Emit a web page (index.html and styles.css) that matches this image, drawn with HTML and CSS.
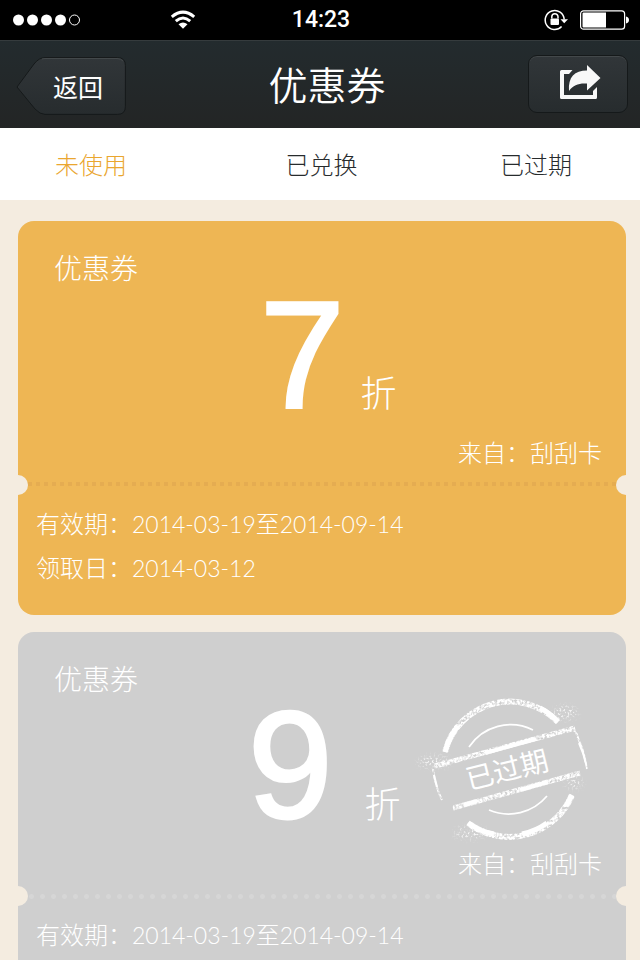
FILE: index.html
```html
<!DOCTYPE html>
<html lang="zh-CN">
<head>
<meta charset="utf-8">
<meta name="viewport" content="width=device-width, initial-scale=1">
<title>优惠券</title>
<link rel="stylesheet" href="styles.css">
</head>
<body>
<div class="status">
  <div class="status-side">
    <svg class="signal" width="70" height="14" viewBox="0 0 70 14" aria-hidden="true">
      <g fill="#fff"><circle cx="6.500" cy="7" r="5.500"/><circle cx="20.500" cy="7" r="5.500"/><circle cx="34.500" cy="7" r="5.500"/><circle cx="48.500" cy="7" r="5.500"/></g>
      <circle cx="62.500" cy="7" r="5" fill="none" stroke="#fff"/>
    </svg>
    <svg class="wifi" width="26" height="20" viewBox="0 0 26 20" aria-hidden="true">
      <g fill="none" stroke="#fff" stroke-width="3"><path d="M1.800 6.800Q13-2.600 24.200 6.800"/><path d="M5.800 11.200Q13 4.800 20.200 11.200"/></g>
      <path d="M8.500 14.200Q13 10.700 17.500 14.200L13 18.800Z" fill="#fff"/>
    </svg>
  </div>
  <time class="clock">14:23</time>
  <div class="status-side status-right">
    <svg width="24" height="22" viewBox="0 0 24 22" aria-hidden="true">
      <path d="M17.600 17.600A9.500 9.500 0 1 1 20.200 10.500" fill="none" stroke="#fff" stroke-width="1.500"/>
      <path d="M16.500 10.300H24L20.200 14.300Z" fill="#fff"/>
      <path d="M7.800 9.500V7.800a3.100 3.100 0 0 1 6.200 0v1.700" fill="none" stroke="#fff" stroke-width="1.500"/>
      <rect x="6.500" y="9.500" width="8.500" height="6.500" rx="1" fill="#fff"/>
    </svg>
    <svg width="50" height="20" viewBox="0 0 50 20" aria-hidden="true">
      <rect x=".6" y=".8" width="44" height="18.400" rx="3" fill="none" stroke="#fff" stroke-width="1.200"/>
      <path d="M2.500 3.500a1 1 0 0 1 1-1H26v15H3.500a1 1 0 0 1-1-1ZM46 6.500q3 .6 3 3.500t-3 3.500Z" fill="#fff"/>
    </svg>
  </div>
</div>
<header class="header">
  <button class="back" type="button">
    <svg class="back-shape" viewBox="0 0 110 58" preserveAspectRatio="none" aria-hidden="true">
      <defs><linearGradient id="key" x1="0" y1="0" x2="0" y2="1"><stop offset="0" stop-color="#313639"/><stop offset="1" stop-color="#272c2e"/></linearGradient></defs>
      <path d="M1 30L18 7Q23 .6 29 .6H101.500Q109.400 .6 109.400 8.500V49.500Q109.400 57.400 101.500 57.400H29Q24 57.400 19 52Z" fill="url(#key)" stroke="#15191a"/>
      <path d="M26 2Q28 1.500 30 1.500H101Q105 1.500 107 4" fill="none" stroke="#43484a"/>
    </svg>
    <span class="back-label">返回</span>
  </button>
  <h1 class="title">优惠券</h1>
  <button class="share" type="button" aria-label="分享">
    <svg width="44" height="38" viewBox="0 0 44 38" aria-hidden="true">
      <path d="M15.500 5H4.500Q3 5 3 6.500V32.500Q3 34 4.500 34H38.500Q40 34 40 32.500V22L36 26V30H7V9H12Z" fill="#f8f8f8"/>
      <path d="M12 26C11 12 17.500 5.500 30 5.500V0L43.500 13L30 25.500V18.500C22 18 16.500 19.500 12 26Z" fill="#f8f8f8"/>
    </svg>
  </button>
</header>
<nav class="tabs">
  <a class="tab tab-active" href="#unused" aria-current="page">未使用</a>
  <a class="tab" href="#redeemed">已兑换</a>
  <a class="tab" href="#expired">已过期</a>
</nav>
<main class="coupons">
  <article class="coupon">
    <div class="coupon-top">
      <h2 class="coupon-name">优惠券</h2>
      <p class="offer"><span class="offer-number">7</span><span class="offer-unit">折</span></p>
      <p class="source">来自：刮刮卡</p>
    </div>
    <div class="coupon-bottom">
      <p>有效期：<span class="date">2014-03-19</span>至<span class="date">2014-09-14</span></p>
      <p>领取日：<span class="date">2014-03-12</span></p>
    </div>
  </article>
  <article class="coupon coupon-expired">
    <div class="coupon-top">
      <h2 class="coupon-name">优惠券</h2>
      <p class="offer"><span class="offer-number">9</span><span class="offer-unit">折</span></p>
      <p class="source">来自：刮刮卡</p>
      <svg class="stamp" width="180" height="160" viewBox="0 0 180 160" role="img" aria-label="已过期">
        <defs>
          <filter id="worn" x="-20" y="-20" width="220" height="200" filterUnits="userSpaceOnUse" color-interpolation-filters="sRGB">
            <feTurbulence type="fractalNoise" baseFrequency=".4" numOctaves="2" seed="8"/>
            <feColorMatrix values="0 0 0 0 1  0 0 0 0 1  0 0 0 0 1  3 0 0 0 -.800"/>
            <feComposite in2="SourceGraphic" operator="in"/>
          </filter>
          <filter id="dust" x="-20" y="-20" width="220" height="200" filterUnits="userSpaceOnUse" color-interpolation-filters="sRGB">
            <feGaussianBlur in="SourceGraphic" stdDeviation="3" result="soft"/>
            <feTurbulence type="fractalNoise" baseFrequency=".5" numOctaves="2" seed="3"/>
            <feColorMatrix values="0 0 0 0 1  0 0 0 0 1  0 0 0 0 1  4 0 0 0 -1.900"/>
            <feComposite in2="soft" operator="in"/>
          </filter>
        </defs>
        <g fill="none" stroke="#fff">
          <g filter="url(#worn)">
            <path d="M25 62A67 67 0 0 1 138 32M48 133A68 68 0 0 0 152 105" stroke-width="6"/>
            <path d="M15 76L155 38M33 118L160 83" stroke-width="5"/>
            <path d="M13 79Q15 96 22 110M147 39Q156 38 158 48Q164 61 167 79" stroke-width="2"/>
          </g>
          <path d="M25 62Q29 47 38 36M120 18Q130 23 138 32M48 133Q61 142 74 144M102 144Q116 141 127 133M146 116L152 105" stroke-width="5"/>
          <path d="M65 63L115 49M44 115L57 111M100 100L128 92" stroke-width="4"/>
          <path d="M159 53Q164 64 166 74M14 85L17 97" stroke-width="2"/>
          <path d="M49 57A50 50 0 0 1 113 40M69 120A50 50 0 0 0 127 106" stroke-width="1.700"/>
        </g>
        <g fill="#fff" filter="url(#dust)">
          <ellipse cx="145" cy="23" rx="12" ry="6"/><ellipse cx="50" cy="143" rx="16" ry="5"/><ellipse cx="14" cy="72" rx="16" ry="5"/><ellipse cx="154" cy="93" rx="8" ry="5"/>
        </g>
        <text class="stamp-text" x="87" y="90" transform="rotate(-14 87 80)">已过期</text>
      </svg>
    </div>
    <div class="coupon-bottom">
      <p>有效期：<span class="date">2014-03-19</span>至<span class="date">2014-09-14</span></p>
    </div>
  </article>
</main>
</body>
</html>
```
FILE: styles.css
```css
* { box-sizing: border-box; }
html { scrollbar-width: none; }
body {
  margin: 0;
  background: #f4ece0;
  font-family: "Liberation Sans", "Noto Sans CJK SC", sans-serif;
  font-weight: 300;
}
h1, h2, p { margin: 0; font-weight: 300; }
button { border: 0; padding: 0; font: inherit; color: inherit; cursor: pointer; }
svg { display: block; }

.status {
  display: grid;
  grid-template-columns: 1fr auto 1fr;
  align-items: center;
  height: 40px;
  padding: 0 10px 0 12px;
  background: #000;
  color: #fff;
}
.status-side { display: flex; align-items: center; }
.status-right { justify-content: flex-end; gap: 12px; }
.wifi { margin-left: 88px; }
.clock { font: 500 23px/40px Roboto, sans-serif; }

.header {
  display: flex;
  align-items: center;
  justify-content: space-between;
  height: 88px;
  padding: 2px 12px 0 16px;
  border-top: 1px solid #353b3d;
  background: linear-gradient(#232b2e, #232525);
  color: #fff;
}
.back {
  position: relative;
  width: 110px;
  height: 58px;
  padding-left: 14px;
  background: none;
}
.back-shape { position: absolute; inset: 0; width: 100%; height: 100%; }
.back-label { position: relative; font: 400 25px/56px "Noto Sans CJK SC", sans-serif; }
.title { padding-bottom: 6px; font: 350 39px/72px "Noto Sans CJK SC", sans-serif; }
.share {
  display: flex;
  align-items: center;
  justify-content: center;
  width: 100px;
  height: 58px;
  margin-bottom: 4px;
  padding-left: 2px;
  border: 1px solid #15191a;
  border-radius: 9px;
  background: linear-gradient(#313639, #272c2e);
  box-shadow: inset 0 1px #43484a;
}

.tabs {
  display: grid;
  grid-template-columns: 182fr 279fr 150fr;
  padding-right: 29px;
  height: 72px;
  background: #fff;
}
.tab {
  color: #272b2d;
  font: 300 24px/72px "Noto Sans CJK SC", sans-serif;
  text-align: center;
  text-decoration: none;
}
.tab-active { color: #eaa62f; }

.coupons {
  display: grid;
  gap: 17px;
  padding: 21px 14px 21px 18px;
}
.coupon {
  overflow: hidden;
  border-radius: 16px;
  background: #eeb654;
  color: #fff;
  font: 300 24px/44px "Noto Sans CJK SC", sans-serif;
}
.coupon-top { position: relative; padding: 26px 24px 8px 36px; }
.coupon-top::before, .coupon-top::after {
  content: "";
  position: absolute;
  bottom: -13px;
  width: 20px;
  height: 20px;
  border-radius: 50%;
  background: #f4ece0;
}
.coupon-top::before { left: -10px; }
.coupon-top::after { right: -10px; }
.coupon-name { font-size: 28px; line-height: 40px; }
.offer {
  display: flex;
  align-items: baseline;
  gap: 16px;
  height: 143px;
  padding-left: 206px;
}
.offer-number {
  font: 400 152px/134px "Liberation Sans", sans-serif;
  -webkit-text-stroke: 3px #fff;
}
.offer-unit { font-size: 36px; line-height: 44px; }
.source { text-align: right; }
.coupon-bottom {
  padding: 19px 18px 24px;
  height: 133px;
  background: repeating-linear-gradient(90deg, #e5ac51 0 4px, transparent 4px 8px) 10px 0 / 100% 4px no-repeat;
}
.date { font: 300 23px/24px Lato, sans-serif; }

.coupon-expired { background: #cfcfcf; }
.coupon-expired .offer { gap: 32px; padding-left: 194px; }
.coupon-expired .coupon-bottom {
  background: radial-gradient(circle, #d6d6d6 2px, transparent 3px) 8px 1px / 11px 5px repeat-x;
}
.stamp { position: absolute; top: 58px; right: 26px; overflow: visible; }
.stamp-text { fill: #fff; font-size: 28px; font-weight: 400; text-anchor: middle; }
```
